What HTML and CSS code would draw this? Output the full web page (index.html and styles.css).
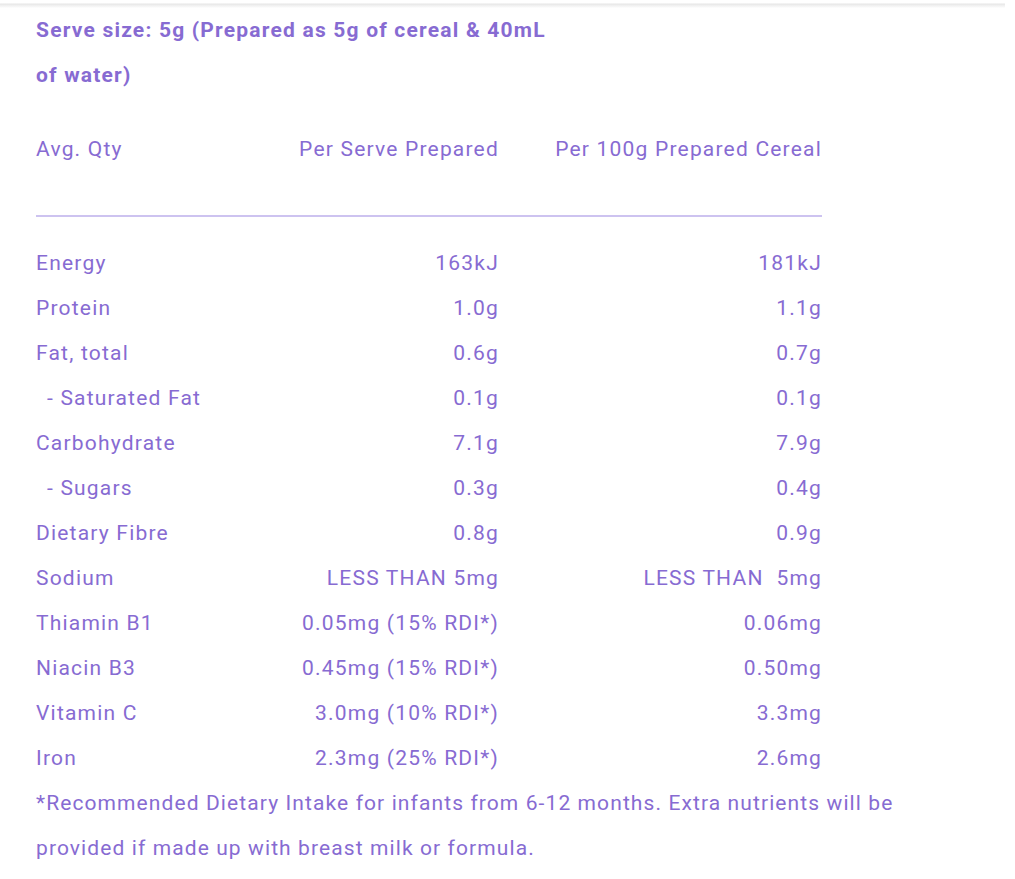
FILE: index.html
```html
<!DOCTYPE html>
<html lang="en">
<head>
<meta charset="utf-8">
<title>Nutrition Information</title>
<link rel="stylesheet" href="styles.css">
</head>
<body>
<div class="topbar"></div>
<main class="panel">
  <h2 class="serve">Serve size: 5g (Prepared as 5g of cereal &amp; 40mL<br>of water)</h2>
  <div class="nutri">
    <div class="head">Avg. Qty</div>
    <div class="head num">Per Serve Prepared</div>
    <div class="head num">Per 100g Prepared Cereal</div>
    <div class="rule"></div>

    <div>Energy</div><div class="num">163kJ</div><div class="num">181kJ</div>
    <div>Protein</div><div class="num">1.0g</div><div class="num">1.1g</div>
    <div>Fat, total</div><div class="num">0.6g</div><div class="num">0.7g</div>
    <div class="sub">- Saturated Fat</div><div class="num">0.1g</div><div class="num">0.1g</div>
    <div>Carbohydrate</div><div class="num">7.1g</div><div class="num">7.9g</div>
    <div class="sub">- Sugars</div><div class="num">0.3g</div><div class="num">0.4g</div>
    <div>Dietary Fibre</div><div class="num">0.8g</div><div class="num">0.9g</div>
    <div>Sodium</div><div class="num">LESS THAN 5mg</div><div class="num">LESS THAN  5mg</div>
    <div>Thiamin B1</div><div class="num">0.05mg (15% RDI*)</div><div class="num">0.06mg</div>
    <div>Niacin B3</div><div class="num">0.45mg (15% RDI*)</div><div class="num">0.50mg</div>
    <div>Vitamin C</div><div class="num">3.0mg (10% RDI*)</div><div class="num">3.3mg</div>
    <div>Iron</div><div class="num">2.3mg (25% RDI*)</div><div class="num">2.6mg</div>
  </div>
  <p class="note">*Recommended Dietary Intake for infants from 6-12 months. Extra nutrients will be<br>provided if made up with breast milk or formula.</p>
</main>
</body>
</html>
```

FILE: styles.css
```css
html, body {
  margin: 0;
  padding: 0;
  background: #ffffff;
}

body {
  font-family: Roboto, "Liberation Sans", sans-serif;
  color: #876bd2;
  font-size: 21px;
  letter-spacing: 1.2px;
}

.topbar {
  width: 1005px;
  height: 8px;
  background: linear-gradient(#ffffff 0, #ffffff 3px, #e6e6e6 4px, #eeeeee 5px, #f8f8f8 7px, #ffffff 8px);
}

.panel {
  padding-left: 36px;
}

.serve {
  margin: 0;
  font-size: 21px;
  font-weight: bold;
  line-height: 45px;
  letter-spacing: 1.2px;
}

.nutri {
  margin-top: 29px;
  width: 786px;
  display: grid;
  grid-template-columns: 200px 263px 323px;
  line-height: 45px;
  white-space: pre;
}

.head {
  padding-bottom: 43px;
}

.num {
  text-align: right;
}

.sub {
  padding-left: 11px;
}

.rule {
  grid-column: 1 / -1;
  height: 2px;
  background: #cdc3f0;
  margin-bottom: 24px;
}

.note {
  margin: 0;
  line-height: 45px;
  letter-spacing: 1.1px;
}
```
